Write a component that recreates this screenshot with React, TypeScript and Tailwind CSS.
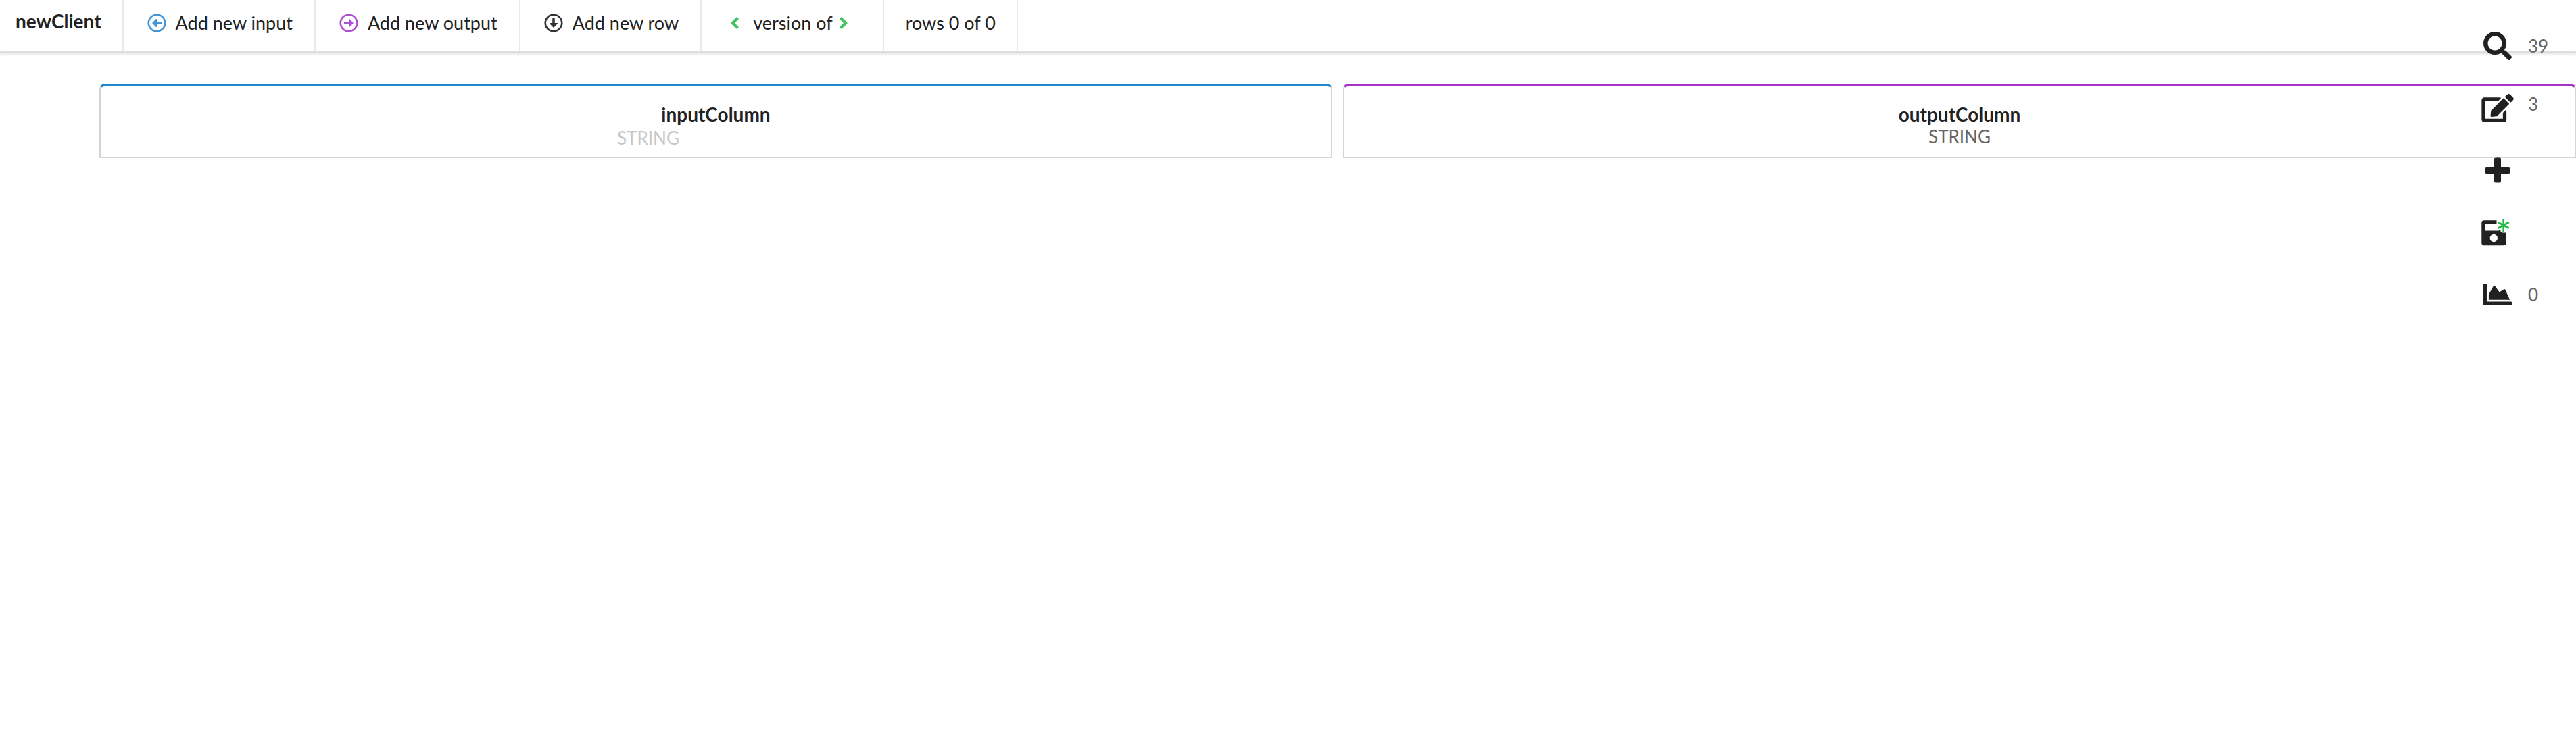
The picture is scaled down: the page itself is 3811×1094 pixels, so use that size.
import type { ReactNode } from "react";
import {
  FaAngleLeft,
  FaAngleRight,
  FaEdit,
  FaRegArrowAltCircleDown,
  FaRegArrowAltCircleLeft,
  FaRegArrowAltCircleRight,
  FaSearch,
} from "react-icons/fa";

function ActionItem({ icon, label }: { icon: ReactNode; label: string }) {
  return (
    <button
      type="button"
      className="flex items-center gap-3.5 border-r-2 border-[#e8e8e9] pr-8 pb-2 pl-[35px]"
    >
      {icon}
      {label}
    </button>
  );
}

function Toolbar() {
  return (
    <nav className="flex h-[78px] border-b-2 border-[#dededf] bg-white text-[27px] leading-8 shadow-[0_2px_4px_0_rgba(34,36,38,0.15)]">
      <h1 className="flex items-center border-r-2 border-[#e8e8e9] pr-[31px] pb-3.5 pl-[23px] text-[28px] font-bold">
        newClient
      </h1>
      <ActionItem
        icon={<FaRegArrowAltCircleLeft className="size-7 text-[#4295d6]" />}
        label="Add new input"
      />
      <ActionItem
        icon={<FaRegArrowAltCircleRight className="size-7 text-[#ad51d0]" />}
        label="Add new output"
      />
      <ActionItem
        icon={<FaRegArrowAltCircleDown className="size-7 text-[#333333]" />}
        label="Add new row"
      />
      <div className="flex items-center border-r-2 border-[#e8e8e9] pr-11 pb-2 pl-[35px]">
        <button type="button" aria-label="Previous version" className="mr-[13px] text-[#42c362]">
          <FaAngleLeft className="size-7" />
        </button>
        version of
        <button type="button" aria-label="Next version" className="ml-0.5 text-[#42c362]">
          <FaAngleRight className="size-7" />
        </button>
      </div>
      <div className="flex items-center border-r-2 border-[#e8e8e9] pr-[31px] pb-2 pl-8">
        rows 0 of 0
      </div>
    </nav>
  );
}

function Columns() {
  return (
    <main className="mt-[46px] grid grid-cols-2 gap-4 pl-[147px] leading-8">
      <section className="flex h-[110px] flex-col items-center rounded-t-lg border-2 border-t-4 border-[#d4d4d5] border-t-[#2185d0] bg-white pt-[25px]">
        <h2 className="font-bold">inputColumn</h2>
        <input
          aria-label="inputColumn type"
          placeholder="STRING"
          className="mt-[3px] h-8 w-[292px] bg-transparent text-[26px] outline-none placeholder:text-[#c7c7c7]"
        />
      </section>
      <section className="flex h-[110px] flex-col items-center rounded-t-lg border-2 border-t-4 border-[#d4d4d5] border-t-[#a333c8] bg-white pt-[25px]">
        <h2 className="font-bold">outputColumn</h2>
        <p className="mt-px text-[26px] text-[#666666]">STRING</p>
      </section>
    </main>
  );
}

function PlusIcon() {
  return (
    <svg viewBox="0 0 38 38" className="size-[38px]" fill="currentColor" aria-hidden="true">
      <rect x="14" y="0.5" width="10" height="37" rx="2" />
      <rect x="0.5" y="14" width="37" height="10" rx="2" />
    </svg>
  );
}

/** Floppy disk with its top right corner taken by a green "new" asterisk. */
function SaveAsNewIcon() {
  return (
    <svg viewBox="0 0 42 42" className="size-[42px]" aria-hidden="true">
      <path
        fill="currentColor"
        fillRule="evenodd"
        d="M4 3.300H22.500V8.500H5.500V18.500H26V17.500H28.500V20H30V21.500H36.200V37.500Q36.200 40.200 33 40.200H4Q.3 40.200 .3 36.500V7Q.3 3.300 4 3.300ZM18.300 23.800a5.700 5.700 0 1 0 0 11.400a5.700 5.700 0 1 0 0-11.400Z"
      />
      <path
        d="M32.700 1V20M24.600 6L40.800 14.800M40.800 6L24.600 14.800"
        stroke="#21ba45"
        strokeWidth="2.700"
        fill="none"
      />
    </svg>
  );
}

function AreaChartIcon() {
  return (
    <svg viewBox="0 0 42 32" className="h-8 w-[42px]" fill="currentColor" aria-hidden="true">
      <path d="M1.200 0H4Q5.200 0 5.200 1.200V26.500H40.800Q42 26.500 42 27.700V30.500Q42 31.700 40.800 31.700H1.200Q0 31.700 0 30.500V1.200Q0 0 1.200 0Z" />
      <path d="M7.900 23.700V15.700L15 3.300Q16 2 17 3.300L23.700 12.600L30.400 8.200Q31.500 7.600 32.200 8.700L39.200 23.700Z" />
    </svg>
  );
}

function SideItem({
  label,
  icon,
  count,
  raised = false,
}: {
  label: string;
  icon: ReactNode;
  count?: string;
  raised?: boolean;
}) {
  return (
    <li className="flex h-[92px] items-center">
      <button type="button" aria-label={label} className="flex w-[50px] justify-center">
        {icon}
      </button>
      {count && (
        <span className={raised ? "mb-3 ml-5 text-[#666666]" : "ml-5 text-[#666666]"}>{count}</span>
      )}
    </li>
  );
}

function SideMenu() {
  return (
    <ul className="absolute top-[22px] right-0 w-[141px] text-[26px] leading-8">
      <SideItem label="Search" icon={<FaSearch className="size-[42px]" />} count="39" />
      <SideItem label="Edit" icon={<FaEdit className="h-[42px] w-[48px]" />} count="3" raised />
      <SideItem label="Add" icon={<PlusIcon />} />
      <SideItem
        label="Save"
        icon={
          <span className="flex w-full pl-px">
            <SaveAsNewIcon />
          </span>
        }
      />
      <SideItem label="Charts" icon={<AreaChartIcon />} count="0" />
    </ul>
  );
}

export default function App() {
  return (
    <div className="relative min-h-screen bg-white font-['Lato',sans-serif] text-[28px] text-[#212121]">
      <Toolbar />
      <Columns />
      <SideMenu />
    </div>
  );
}
